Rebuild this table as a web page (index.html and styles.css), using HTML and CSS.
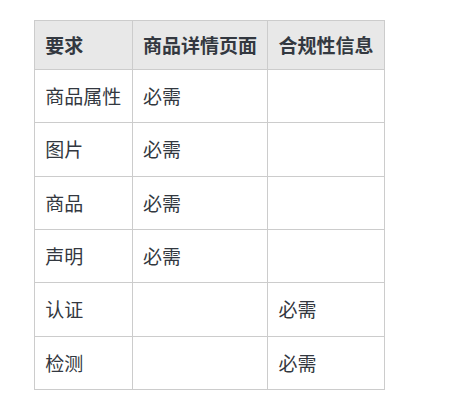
FILE: index.html
```html
<!DOCTYPE html>
<html lang="zh">
<head>
<meta charset="utf-8">
<link rel="stylesheet" href="styles.css">
</head>
<body>
<div class="wrap">
<table class="req">
<thead>
<tr><th>要求</th><th>商品详情页面</th><th>合规性信息</th></tr>
</thead>
<tbody>
<tr><td>商品属性</td><td>必需</td><td></td></tr>
<tr><td>图片</td><td>必需</td><td></td></tr>
<tr><td>商品</td><td>必需</td><td></td></tr>
<tr><td>声明</td><td>必需</td><td></td></tr>
<tr><td>认证</td><td></td><td>必需</td></tr>
<tr><td>检测</td><td></td><td>必需</td></tr>
</tbody>
</table>
</div>
</body>
</html>
```

FILE: styles.css
```css
html, body {
  margin: 0;
  padding: 0;
  background: #ffffff;
}
.wrap {
  padding: 20px 34px;
}
.req {
  border-collapse: collapse;
  font-family: "Noto Sans CJK SC", "Noto Sans", sans-serif;
  font-size: 19px;
  line-height: 28.33px;
  color: #333840;
}
.req th, .req td {
  border: 1px solid #cccccc;
  text-align: left;
  padding: 12px 10.3px;
  vertical-align: middle;
}
.req th {
  background: #e8e8e8;
  font-weight: bold;
  padding: 9.8px 10.3px;
}
```
